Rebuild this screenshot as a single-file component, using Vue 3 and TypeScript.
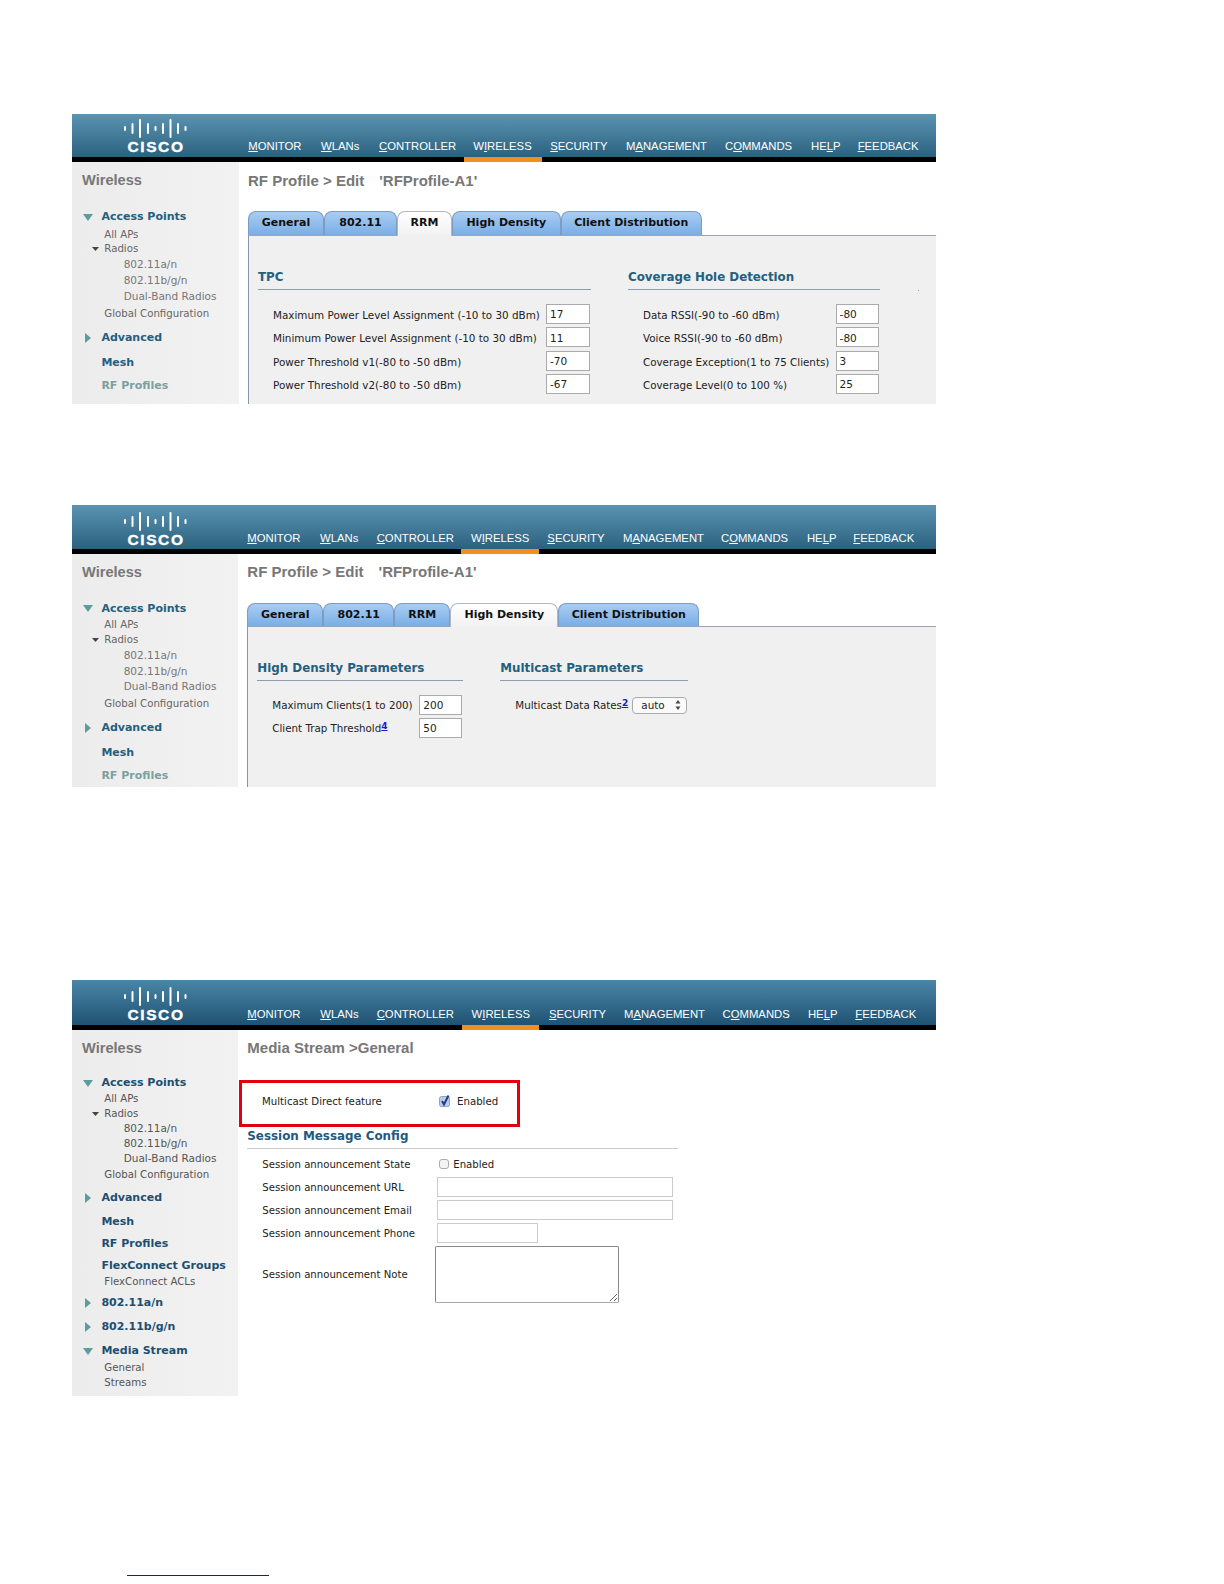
<script setup lang="ts">
type Kind = 'title' | 'head' | 'sub' | 'leaf'
type Arrow = 'down' | 'right' | 'small' | ''
interface SideRaw { k: Kind; t: string; c: number; a?: Arrow; tone?: string }

const navNames: [string, number][] = [
  ['MONITOR', 0], ['WLANs', 0], ['CONTROLLER', 0], ['WIRELESS', 1], ['SECURITY', 0],
  ['MANAGEMENT', 1], ['COMMANDS', 1], ['HELP', 2], ['FEEDBACK', 0],
]

function buildNav(starts: number[]) {
  return navNames.map(([name, i], n) => ({
    pre: name.slice(0, i),
    u: name[i],
    post: name.slice(i + 1),
    width: (n < starts.length - 1 ? starts[n + 1] - starts[n] : 70) + 'px',
  }))
}

function buildSide(rows: SideRaw[]) {
  return rows.map((r, i) => ({
    ...r,
    mt: (i === 0 ? r.c - 7 : i === 1 ? r.c + 0.8 - rows[0].c - 14 : r.c - rows[i - 1].c - 14) + 'px',
  }))
}

function baseSide(c: number[], rfTone: string): SideRaw[] {
  return [
    { k: 'title', t: 'Wireless', c: c[0] },
    { k: 'head', t: 'Access Points', c: c[1], a: 'down' },
    { k: 'sub', t: 'All APs', c: c[2] },
    { k: 'sub', t: 'Radios', c: c[3], a: 'small' },
    { k: 'leaf', t: '802.11a/n', c: c[4] },
    { k: 'leaf', t: '802.11b/g/n', c: c[5] },
    { k: 'leaf', t: 'Dual-Band Radios', c: c[6] },
    { k: 'sub', t: 'Global Configuration', c: c[7] },
    { k: 'head', t: 'Advanced', c: c[8], a: 'right' },
    { k: 'head', t: 'Mesh', c: c[9] },
    { k: 'head', t: 'RF Profiles', c: c[10], tone: rfTone },
  ]
}

function buildTabs(starts: number[], active: number) {
  const names = ['General', '802.11', 'RRM', 'High Density', 'Client Distribution']
  return names.map((t, i) => ({ t, on: i === active, width: starts[i + 1] - starts[i] + 'px' }))
}

const panels = [
  {
    id: 'p1',
    nav: buildNav([248.3, 321, 379, 473.3, 550.3, 626, 725, 811, 857.7]),
    markLeft: '392px', markW: '78px',
    side: buildSide(baseSide([18, 54.5, 72, 86.5, 102.5, 118.5, 134, 151, 175, 200, 223], 'muted')),
    tabs: buildTabs([248, 324, 397, 452, 560.5, 702], 2),
  },
  {
    id: 'p2',
    nav: buildNav([247.3, 320, 376.7, 471, 547.4, 623, 721, 807, 853.4]),
    markLeft: '389px', markW: '78px',
    side: buildSide(baseSide([17.5, 53.7, 70.3, 85.3, 101.3, 117, 132.3, 149.3, 173, 198, 221], 'muted')),
    tabs: buildTabs([247, 323, 394, 450, 558, 699], 3),
  },
  {
    id: 'p3',
    nav: buildNav([247.3, 320.3, 376.7, 471.6, 549, 624, 722.6, 808, 855.4]),
    markLeft: '390px', markW: '77px',
    side: buildSide([
      ...baseSide([17.7, 52.3, 68.7, 83.3, 98.3, 113.3, 128.7, 144, 167.3, 191.7, 213.3], ''),
      { k: 'head', t: 'FlexConnect Groups', c: 235.3 },
      { k: 'sub', t: 'FlexConnect ACLs', c: 251 },
      { k: 'head', t: '802.11a/n', c: 272.7, a: 'right' },
      { k: 'head', t: '802.11b/g/n', c: 296.7, a: 'right' },
      { k: 'head', t: 'Media Stream', c: 320.7, a: 'down' },
      { k: 'sub', t: 'General', c: 337.3, tone: 'current' },
      { k: 'sub', t: 'Streams', c: 352.3 },
    ]),
    tabs: [],
  },
]

const tpc = [
  ['Maximum Power Level Assignment (-10 to 30 dBm)', '17'],
  ['Minimum Power Level Assignment (-10 to 30 dBm)', '11'],
  ['Power Threshold v1(-80 to -50 dBm)', '-70'],
  ['Power Threshold v2(-80 to -50 dBm)', '-67'],
]
const coverage = [
  ['Data RSSI(-90 to -60 dBm)', '-80'],
  ['Voice RSSI(-90 to -60 dBm)', '-80'],
  ['Coverage Exception(1 to 75 Clients)', '3'],
  ['Coverage Level(0 to 100 %)', '25'],
]
const bars = [
  [1, 6], [8.5, 12], [16, 20], [24, 12], [31.5, 6], [39, 12], [46.5, 20], [54, 12], [61.5, 6],
]
</script>

<template>
  <div class="page">
    <section v-for="p in panels" :key="p.id" class="panel" :class="p.id">
      <header class="head">
        <div class="band">
          <div class="logo">
            <svg class="bars" width="64" height="20" viewBox="0 0 64 20">
              <rect
                v-for="(b, i) in bars"
                :key="i"
                :x="b[0] - 1"
                :y="10 - b[1] / 2 + 1"
                width="2"
                :height="b[1] - 1"
                rx="1"
                fill="#fff"
              />
            </svg>
            <div class="logo-text">CISCO</div>
          </div>
          <nav class="nav">
            <span v-for="n in p.nav" :key="n.u + n.post" class="nav-item" :style="{ width: n.width }">{{ n.pre }}<u>{{ n.u }}</u>{{ n.post }}</span>
          </nav>
        </div>
        <div class="strip"><i class="mark" :style="{ marginLeft: p.markLeft, width: p.markW }"></i></div>
      </header>

      <div class="main">
        <aside class="side">
          <div
            v-for="r in p.side"
            :key="r.t + r.c"
            class="row"
            :class="[r.k, r.tone]"
            :style="{ marginTop: r.mt }"
          >
            <span v-if="r.k === 'head' || r.k === 'sub'" class="slot">
              <svg v-if="r.a === 'down'" width="10" height="7" viewBox="0 0 10 7"><path d="M0 0H10L5 7Z" fill="#5d9c9c" /></svg>
              <svg v-else-if="r.a === 'right'" class="ar" width="6" height="10" viewBox="0 0 6 10"><path d="M0 0L6 5L0 10Z" fill="#5d9c9c" /></svg>
              <svg v-else-if="r.a === 'small'" width="7" height="4" viewBox="0 0 7 4"><path d="M0 0H7L3.5 4Z" fill="#444" /></svg>
            </span>
            <span class="row-text">{{ r.t }}</span>
          </div>
        </aside>

        <div v-if="p.id !== 'p3'" class="content">
          <h1 class="page-title">RF Profile &gt; Edit<span class="quoted">'RFProfile-A1'</span></h1>
          <div class="tabs">
            <span v-for="t in p.tabs" :key="t.t" class="tab" :class="{ on: t.on }" :style="{ width: t.width }">{{ t.t }}</span>
          </div>
          <div class="tab-body">
            <template v-if="p.id === 'p1'">
              <div class="group tpc">
                <h2>TPC</h2>
                <div v-for="f in tpc" :key="f[0]" class="field"><label>{{ f[0] }}</label><input :value="f[1]" readonly /></div>
              </div>
              <div class="group cov">
                <h2>Coverage Hole Detection</h2>
                <div v-for="f in coverage" :key="f[0]" class="field"><label>{{ f[0] }}</label><input :value="f[1]" readonly /></div>
              </div>
              <i class="speck"></i>
            </template>
            <template v-else>
              <div class="group hd">
                <h2>High Density Parameters</h2>
                <div class="field"><label>Maximum Clients(1 to 200)</label><input value="200" readonly /></div>
                <div class="field"><label>Client Trap Threshold<a class="note">4</a></label><input value="50" readonly /></div>
              </div>
              <div class="group mc">
                <h2>Multicast Parameters</h2>
                <div class="field">
                  <label>Multicast Data Rates<a class="note">2</a></label>
                  <div class="select">
                    <span>auto</span>
                    <svg width="6" height="10" viewBox="0 0 6 10"><path d="M3 0L5.5 3.5H.5ZM3 10L.5 6.5H5.5Z" fill="#444" /></svg>
                  </div>
                </div>
              </div>
            </template>
          </div>
        </div>

        <div v-else class="content media">
          <h1 class="page-title">Media Stream &gt;General</h1>
          <div class="callout">
            <label>Multicast Direct feature</label>
            <span class="check on">
              <svg width="12" height="13" viewBox="0 0 12 13"><rect x="0.5" y="2.5" width="10" height="10" rx="2" fill="#b9cdea" stroke="#8ea3c4" /><path d="M3 7L5 10.5L9.5 1.5" fill="none" stroke="#1d3f86" stroke-width="2" /></svg>
            </span>
            <span class="check-text">Enabled</span>
          </div>
          <h2 class="session">Session Message Config</h2>
          <div class="form">
            <label>Session announcement State</label>
            <div class="state"><span class="box"></span><span>Enabled</span></div>
            <label>Session announcement URL</label>
            <input class="wide" readonly />
            <label>Session announcement Email</label>
            <input class="wide" readonly />
            <label>Session announcement Phone</label>
            <input class="short" readonly />
            <label>Session announcement Note</label>
            <textarea readonly></textarea>
          </div>
        </div>
      </div>
    </section>
    <div class="footnote-rule"></div>
  </div>
</template>

<style>
html, body { margin: 0; background: #fff; }
</style>

<style scoped>
.page {
  box-sizing: border-box;
  width: 1224px;
  height: 1584px;
  padding: 114px 0 0 72px;
  overflow: hidden;
  font-family: "DejaVu Sans", Verdana, sans-serif;
  color: #222;
}
.panel { width: 864px; display: flex; flex-direction: column; }
.p1 { height: 290px; }
.p2 { height: 282px; margin-top: 101px; }
.p3 { height: 416px; margin-top: 193px; }

.band {
  display: flex;
  height: 43px;
  background: linear-gradient(#5a94b2, #2b617f);
}
.p2 .band { height: 44px; }
.p3 .band { height: 45px; background: linear-gradient(#4a86a6, #1f5273); }
.logo { box-sizing: border-box; flex: none; width: 176.3px; padding: 4px 0 0 52px; }
.p2 .logo { width: 175.3px; padding-top: 6px; }
.p3 .logo { width: 175.3px; padding-top: 6px; }
.bars { display: block; }
.logo-text {
  width: 64px;
  margin-top: 1px;
  text-align: center;
  color: #fff;
  font: bold 15.5px/16px "Liberation Sans", Arial, sans-serif;
  letter-spacing: 1.6px;
  -webkit-text-stroke: 0.4px #fff;
}
.nav { display: flex; align-items: flex-end; padding-bottom: 4px; }
.nav-item {
  flex: none;
  white-space: nowrap;
  color: #fff;
  font: 11.3px/14px "Liberation Sans", Arial, sans-serif;
}
.strip { display: flex; height: 5px; background: #000; }
.mark { display: block; background: #ee8f1f; }

.main { flex: 1; display: flex; min-height: 0; }
.side {
  flex: none;
  width: 167px;
  background: linear-gradient(90deg, #ececec, #f2f2f2);
  overflow: hidden;
}
.p2 .side, .p3 .side { width: 166px; }
.row {
  display: flex;
  align-items: center;
  height: 14px;
  line-height: 14px;
  white-space: nowrap;
}
.slot { display: flex; align-items: center; flex: none; }
.title {
  padding-left: 10px;
  font: bold 14.6px/14px "Liberation Sans", Arial, sans-serif;
  color: #777;
}
.row.head {
  padding-left: 11px;
  font-size: 11px;
  font-weight: bold;
  color: #22607f;
}
.row.head .slot { width: 18.4px; }
.row.head .ar { margin-left: 2px; }
.row.head.muted { color: #7ba0a0; }
.sub {
  padding-left: 20px;
  font-size: 10.2px;
  color: #666;
}
.sub .slot { width: 12.3px; }
.leaf {
  padding-left: 51.7px;
  font-size: 10.5px;
  color: #777;
}
.leaf .row-text { margin-top: -2px; }
.current { color: #3d5f70; }
.p3 .row.head { color: #1c4f70; }
.p3 .sub, .p3 .leaf { color: #555; }

.content { flex: 1; min-width: 0; margin-left: 9px; display: flex; flex-direction: column; }
.p2 .content, .p3 .content { margin-left: 9.3px; }
.page-title {
  box-sizing: border-box;
  height: 49px;
  margin: 0;
  padding-top: 9px;
  font: bold 15px/20px "Liberation Sans", Arial, sans-serif;
  color: #777;
}
.p2 .page-title, .p3 .page-title { padding-top: 8px; }
.quoted { margin-left: 15px; }
.tabs { display: flex; height: 23.6px; }
.p2 .tabs { height: 23px; }
.tab {
  box-sizing: border-box;
  flex: none;
  height: 100%;
  border: 1px solid #7d9cc4;
  border-bottom: 0;
  border-radius: 8px 8px 0 0;
  background: linear-gradient(#a9cdf2, #79aee6);
  color: #111;
  text-align: center;
  font-size: 11px;
  font-weight: bold;
  line-height: 21px;
  white-space: nowrap;
}
.p1 .tab { line-height: 22px; }
.tab.on { background: linear-gradient(#fff, #f1f1f1); border-color: #b0b8c4; height: calc(100% + 1px); position: relative; z-index: 1; }
.tab-body {
  position: relative;
  flex: 1;
  display: flex;
  background: #f0f0f0;
  border-top: 1px solid #9aa5b5;
  border-left: 1px solid #8a96a8;
}
.group { flex: none; box-sizing: border-box; padding-top: 33.4px; }
.p2 .group { padding-top: 33px; }
.group h2 {
  box-sizing: border-box;
  height: 21px;
  margin: 0 0 14px;
  border-bottom: 1px solid #8f9ab5;
  font-size: 11.85px;
  line-height: 16px;
  font-weight: bold;
  color: #22607f;
}
.field { display: flex; align-items: center; height: 20px; margin-bottom: 3.3px; }
.field label {
  box-sizing: border-box;
  padding-left: 15px;
  font-size: 10.4px;
  white-space: nowrap;
  color: #222;
}
.cov label { font-size: 10.3px; }
.p2 .field label { font-size: 10.3px; }
.p1 .field label { padding-top: 2px; }
.field input {
  box-sizing: border-box;
  height: 20px;
  padding: 0 3px;
  border: 1px solid #aaa;
  background: #fff;
  font: 10.5px "DejaVu Sans", sans-serif;
  color: #222;
  outline: none;
}
.p1 .field input { padding-top: 1px; }
.tpc { width: 333px; margin-left: 9px; }
.tpc label { width: 288px; }
.tpc input { width: 44px; }
.cov { width: 252px; margin-left: 37px; }
.cov label { width: 207.6px; }
.cov input { width: 43.5px; }
.speck { position: absolute; left: 669px; top: 54px; width: 1px; height: 1px; background: #999; }
.hd { width: 206px; margin-left: 9px; }
.hd label { width: 162px; }
.hd input { width: 42.5px; }
.mc { width: 188px; margin-left: 37px; }
.mc label { width: 132px; }
.note {
  position: relative;
  top: -3px;
  font-size: 9px;
  font-weight: bold;
  color: #1a1ad0;
  text-decoration: underline;
}
.select {
  box-sizing: border-box;
  display: flex;
  align-items: center;
  justify-content: space-between;
  width: 55px;
  height: 17px;
  padding: 0 5px 0 8px;
  border: 1px solid #aaa;
  border-radius: 4px;
  background: #fafafa;
  font-size: 10.4px;
}

.media .page-title { height: 50px; }
.callout {
  box-sizing: border-box;
  display: flex;
  align-items: center;
  width: 281px;
  height: 47px;
  margin-left: -8.3px;
  padding: 0 0 4px 20px;
  border: 3px solid #e2000f;
  font-size: 10.2px;
  position: relative;
}
.callout label { width: 177px; }
.check { display: flex; width: 18px; margin-top: -2px; }
.session {
  box-sizing: border-box;
  width: 431px;
  height: 22px;
  margin: 0 0 5px;
  padding-top: 1px;
  border-bottom: 1px solid #ccc;
  font: bold 11.9px/16px "DejaVu Sans", sans-serif;
  color: #1f5a80;
}
.form {
  display: grid;
  grid-template-columns: 175px auto;
  justify-content: start;
  align-items: center;
  row-gap: 3px;
  padding-left: 15px;
  font-size: 10.15px;
}
.state { display: flex; align-items: center; gap: 4px; height: 20px; padding-left: 2px; }
.box {
  box-sizing: border-box;
  width: 10px;
  height: 10px;
  border: 1px solid #aaa;
  border-radius: 3px;
  background: #f4f4f4;
}
.form input {
  box-sizing: border-box;
  height: 20px;
  border: 1px solid #ccc;
  background: #fff;
  outline: none;
}
.wide { width: 235.5px; }
.short { width: 100.5px; }
.form textarea {
  box-sizing: border-box;
  display: block;
  width: 184px;
  height: 57px;
  margin: 0 0 0 -2px;
  border: 1px solid #888;
  border-bottom-color: #aaa;
  border-radius: 2px;
  background: #fff;
  outline: none;
  resize: both;
}
.footnote-rule {
  width: 142px;
  height: 1px;
  margin: 179px 0 0 55px;
  background: #1b1b8f;
}
</style>
